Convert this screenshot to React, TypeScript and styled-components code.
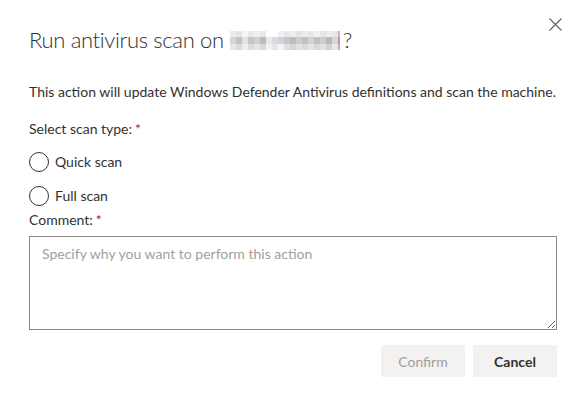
import React from "react";
import styled, { createGlobalStyle } from "styled-components";

const Global = createGlobalStyle`
  html, body { margin: 0; padding: 0; background: #fff; }
  body { font-family: Lato, "Open Sans", Arial, sans-serif; color: #323130; }
  * { box-sizing: border-box; }
`;

const Dialog = styled.div`
  width: 586px;
  height: 400px;
  padding: 0 29px;
  display: flex;
  flex-direction: column;
`;

const Header = styled.div`
  display: flex;
  align-items: flex-start;
  justify-content: space-between;
  padding-top: 24px;
`;

const Title = styled.h1`
  margin: 0;
  font-size: 22px;
  letter-spacing: -0.35px;
  font-weight: 300;
  line-height: 32px;
  color: #323130;
  display: flex;
  align-items: center;
  white-space: nowrap;
`;

const Redacted = styled.span`
  display: inline-block;
  width: 110px;
  height: 19px;
  margin: 0 3px 0 6px;
  background-repeat: no-repeat;
  background-size: 110px 6px, 110px 7px, 110px 6px;
  background-position: 0 0, 0 6px, 0 13px;
  background-image:
    linear-gradient(90deg, #ececec 0 6px, #e6e4e4 6px 12px, #f3f4f5 12px 18px, #e9e9eb 18px 24px, #f0efef 24px 30px, #e7e8ea 30px 36px, #fff 36px 48px, #f1f1f3 48px 54px, #e8e8ea 54px 60px, #efefef 60px 66px, #e5e5e7 66px 72px, #eeedee 72px 78px, #e9e8e8 78px 84px, #f2f1f1 84px 90px, #e6e5e6 90px 96px, #eeeded 96px 102px, #e8e7e7 102px 108px, #c9b8ba 108px 110px),
    linear-gradient(90deg, #d8d4d2 0 6px, #c8c0bd 6px 12px, #e0e4e8 12px 18px, #c3c4c8 18px 24px, #d2cfd0 24px 30px, #b9bcc4 30px 36px, #e9e9ea 36px 42px, #dadade 42px 48px, #cfd3d8 48px 54px, #c6c7cb 54px 60px, #bdbcc0 60px 66px, #cdcdd0 66px 72px, #c2c0c2 72px 78px, #d4d2d2 78px 84px, #c1bfc0 84px 90px, #cfcccd 90px 96px, #bcb8b9 96px 102px, #d8d6d6 102px 108px, #b39ea1 108px 110px),
    linear-gradient(90deg, #e8e6e6 0 6px, #dfdbda 6px 12px, #edeff1 12px 18px, #dcdcdf 18px 24px, #e6e4e5 24px 30px, #d8d9dd 30px 36px, #f2f2f3 36px 42px, #e6e6e9 42px 48px, #f4f4f5 48px 54px, #dfdfe1 54px 60px, #d6d6d8 60px 66px, #e1e1e3 66px 72px, #dbd9db 72px 78px, #e5e3e3 78px 84px, #dad8d9 84px 90px, #e2e0e1 90px 96px, #d5d2d3 96px 102px, #e8e6e6 102px 108px, #c3b2b4 108px 110px);
`;

const CloseButton = styled.button`
  border: 0;
  background: transparent;
  padding: 0;
  margin: -12px -10px 0 0;
  width: 24px;
  height: 24px;
  display: flex;
  align-items: center;
  justify-content: center;
  cursor: pointer;
`;

const Body = styled.div`
  display: flex;
  flex-direction: column;
  font-size: 14px;
  line-height: 20px;
`;

const Description = styled.p`
  margin: 26px 0 0 0;
  white-space: nowrap;
`;

const Label = styled.div<{ $top: number }>`
  margin-top: ${(p) => p.$top}px;
  color: #323130;
`;

const Required = styled.span`
  color: #a4262c;
  margin-left: 3px;
`;

const RadioRow = styled.label<{ $top: number }>`
  display: flex;
  align-items: center;
  gap: 6px;
  margin-top: ${(p) => p.$top}px;
`;

const RadioCircle = styled.span`
  width: 20px;
  height: 20px;
  border-radius: 50%;
  border: 1px solid #323130;
  background: #fff;
  flex: none;
`;

const TextArea = styled.textarea`
  margin-top: 6px;
  width: 528px;
  height: 94px;
  border: 1px solid #8a8886;
  border-radius: 0;
  padding: 7px 12px;
  font-family: inherit;
  font-size: 14px;
  line-height: 20px;
  color: #323130;
  resize: vertical;
  outline: none;
  &::placeholder { color: #a19f9d; }
`;

const Footer = styled.div`
  display: flex;
  justify-content: flex-end;
  gap: 8px;
  margin-top: 15px;
`;

const Button = styled.button<{ $disabled?: boolean }>`
  width: 84px;
  height: 32px;
  border: 0;
  border-radius: 1px;
  background: #f3f2f1;
  font-family: inherit;
  font-size: 14px;
  font-weight: ${(p) => (p.$disabled ? 400 : 700)};
  color: ${(p) => (p.$disabled ? "#a19f9d" : "#323130")};
`;

export default function App() {
  return (
    <>
      <Global />
      <Dialog>
        <Header>
          <Title>
            Run antivirus scan on<Redacted aria-label="hidden machine name" />?
          </Title>
          <CloseButton aria-label="Close">
            <svg width="13" height="13" viewBox="0 0 13 13">
              <path d="M0.5 0.5 L12.5 12.5 M12.5 0.5 L0.5 12.5" stroke="#605e5c" strokeWidth="1.1" fill="none" />
            </svg>
          </CloseButton>
        </Header>
        <Body>
          <Description>
            This action will update Windows Defender Antivirus definitions and scan the machine.
          </Description>
          <Label $top={17}>
            Select scan type:<Required>*</Required>
          </Label>
          <RadioRow $top={13}>
            <RadioCircle />
            Quick scan
          </RadioRow>
          <RadioRow $top={14}>
            <RadioCircle />
            Full scan
          </RadioRow>
          <Label $top={4}>
            Comment:<Required>*</Required>
          </Label>
          <TextArea placeholder="Specify why you want to perform this action" />
          <Footer>
            <Button $disabled disabled>Confirm</Button>
            <Button>Cancel</Button>
          </Footer>
        </Body>
      </Dialog>
    </>
  );
}
